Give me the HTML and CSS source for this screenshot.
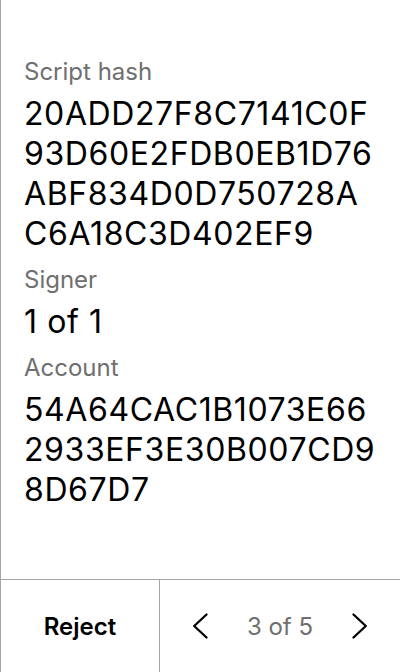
FILE: index.html
```html
<!DOCTYPE html>
<html>
<head>
<meta charset="utf-8">
<link rel="stylesheet" href="styles.css">
</head>
<body>
<div class="screen">
  <main class="content">
    <section class="field">
      <div class="label">Script hash</div>
      <div class="value">20ADD27F8C7141C0F<br>93D60E2FDB0EB1D76<br>ABF834D0D750728A<br>C6A18C3D402EF9</div>
    </section>
    <section class="field">
      <div class="label">Signer</div>
      <div class="value">1 of 1</div>
    </section>
    <section class="field">
      <div class="label">Account</div>
      <div class="value">54A64CAC1B1073E66<br>2933EF3E30B007CD9<br>8D67D7</div>
    </section>
  </main>
  <footer class="nav">
    <div class="reject">Reject</div>
    <div class="pager">
      <div class="arrow">
        <svg width="16" height="26" viewBox="0 0 16 26"><path d="M14.5 1.5 L2.2 13 L14.5 24.5" fill="none" stroke="#000" stroke-width="2.3" stroke-linecap="round" stroke-linejoin="round"/></svg>
      </div>
      <div class="count">3 of 5</div>
      <div class="arrow">
        <svg width="16" height="26" viewBox="0 0 16 26"><path d="M1.5 1.5 L13.8 13 L1.5 24.5" fill="none" stroke="#000" stroke-width="2.3" stroke-linecap="round" stroke-linejoin="round"/></svg>
      </div>
    </div>
  </footer>
</div>
</body>
</html>
```
FILE: styles.css
```css
html, body {
  margin: 0;
  padding: 0;
  background: #fff;
}
body {
  font-family: Inter, "Noto Sans", sans-serif;
  color: #000;
}
.screen {
  width: 400px;
  height: 672px;
  box-sizing: border-box;
  border-left: 1px solid #a6a6a6;
  display: flex;
  flex-direction: column;
}
.content {
  flex: 1;
  padding: 58px 23px 0;
  display: flex;
  flex-direction: column;
  gap: 12px;
}
.field {
  display: flex;
  flex-direction: column;
  gap: 8px;
}
.label {
  font-size: 24px;
  line-height: 28px;
  color: #6f6f6f;
}
.value {
  font-size: 32px;
  line-height: 40px;
  letter-spacing: 0.6px;
  color: #000;
  white-space: nowrap;
}
.nav {
  height: 92px;
  border-top: 1px solid #a6a6a6;
  display: grid;
  grid-template-columns: 159px 1fr;
}
.reject {
  display: flex;
  align-items: center;
  justify-content: center;
  font-size: 24px;
  font-weight: 600;
  border-right: 1px solid #a6a6a6;
}
.pager {
  display: grid;
  grid-template-columns: 80px 80px 80px;
  align-items: center;
}
.arrow {
  display: flex;
  justify-content: center;
  align-items: center;
}
.count {
  text-align: center;
  font-size: 24px;
  color: #6f6f6f;
}
```
